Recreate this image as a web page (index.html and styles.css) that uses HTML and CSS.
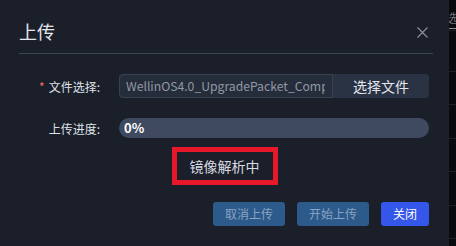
FILE: index.html
```html
<!DOCTYPE html>
<html lang="zh-CN">
<head>
<meta charset="utf-8">
<title>上传</title>
<link rel="stylesheet" href="styles.css">
</head>
<body>
<div class="page">
  <div class="dialog">
    <div class="header">
      <span class="title">上传</span>
      <span class="close">
        <svg width="11" height="11" viewBox="0 0 11 11"><path d="M0.5 0.5 L10.5 10.5 M10.5 0.5 L0.5 10.5" stroke="#8d929c" stroke-width="1.1" fill="none"/></svg>
      </span>
    </div>
    <div class="body">
      <div class="row">
        <div class="label"><span class="req">*</span>文件选择:</div>
        <div class="file">
          <div class="file-input"><div class="file-name">WellinOS4.0_UpgradePacket_Comp</div></div>
          <div class="file-btn">选择文件</div>
        </div>
      </div>
      <div class="row row-progress">
        <div class="label">上传进度:</div>
        <div class="progress"><span class="pct">0%</span></div>
      </div>
      <div class="status"><span class="status-box">镜像解析中</span></div>
      <div class="footer">
        <button class="btn btn-muted">取消上传</button>
        <button class="btn btn-muted">开始上传</button>
        <button class="btn btn-primary">关闭</button>
      </div>
    </div>
  </div>
  <div class="side">
    <div class="side-head"><span class="side-tab">选</span></div>
    <div class="side-row side-row-tall"></div>
    <div class="side-row"></div>
    <div class="side-row"></div>
    <div class="side-row"></div>
    <div class="side-row"></div>
    <div class="side-row"></div>
  </div>
</div>
</body>
</html>
```

FILE: styles.css
```css
* { box-sizing: border-box; }
html, body { margin: 0; padding: 0; }
body {
  width: 456px;
  height: 246px;
  overflow: hidden;
  background: #090a0e;
  font-family: "Noto Sans CJK SC", "Noto Sans", sans-serif;
}
.page {
  display: flex;
  height: 246px;
}
.dialog {
  width: 449px;
  flex: none;
  background: #1b1f2a;
  height: 246px;
}
.header {
  margin: 0 16px 0 19px;
  height: 54px;
  padding-top: 19px;
  border-bottom: 1px solid #3d4454;
  display: flex;
  justify-content: space-between;
  align-items: flex-start;
}
.title {
  font-size: 18px;
  line-height: 24px;
  color: #e3e6ec;
}
.close {
  display: flex;
  margin-top: 8px;
  margin-right: 5px;
}
.body {
  padding: 20px 20px 0 0;
}
.row {
  display: flex;
  align-items: center;
  height: 24px;
}
.row-progress {
  margin-top: 20px;
  height: 20px;
}
.label {
  width: 119px;
  flex: none;
  text-align: right;
  padding-right: 19px;
  font-size: 12px;
  color: #dfe2e8;
}
.req {
  color: #f56c6c;
  margin-right: 4px;
}
.file {
  flex: 1;
  display: flex;
  height: 24px;
  border-radius: 4px;
  background: #2a3344;
  overflow: hidden;
}
.file-input {
  width: 214px;
  flex: none;
  height: 24px;
  border: 1px solid #3a4252;
  border-radius: 4px 0 0 4px;
  background: #252d3b;
  padding: 0 7px 0 6px;
  display: flex;
  align-items: center;
}
.file-name {
  flex: 1;
  min-width: 0;
  overflow: hidden;
  white-space: nowrap;
  font-size: 12.2px;
  color: #9298a3;
  line-height: 22px;
}
.file-btn {
  flex: 1;
  display: flex;
  align-items: center;
  justify-content: center;
  font-size: 14px;
  color: #e3e6ec;
}
.progress {
  flex: 1;
  height: 20px;
  border-radius: 10px;
  background: #3f4a60;
  display: flex;
  align-items: center;
  padding-left: 5px;
}
.pct {
  font-size: 13px;
  font-weight: bold;
  color: #ffffff;
  line-height: 20px;
}
.status {
  padding-left: 20px;
  margin-top: 9px;
  display: flex;
  justify-content: center;
}
.status-box {
  display: block;
  width: 106px;
  height: 38px;
  border: 5px solid #e8182b;
  text-align: center;
  font-size: 14px;
  line-height: 28px;
  color: #d8dbe2;
}
.footer {
  margin-top: 17px;
  display: flex;
  justify-content: flex-end;
  gap: 12px;
}
.btn {
  height: 24px;
  border: none;
  border-radius: 3px;
  padding: 0 12px;
  font-family: inherit;
  font-size: 12px;
  line-height: 24px;
}
.btn-muted {
  background: #2c5a8a;
  color: #8aa3c2;
}
.btn-primary {
  background: #3456ea;
  color: #ffffff;
}
.side {
  flex: 1;
  overflow: hidden;
  display: flex;
  flex-direction: column;
}
.side-head {
  height: 31px;
  border-bottom: 1px solid #1d2027;
  margin-left: -3px;
  padding-top: 4px;
}
.side-tab {
  display: inline-block;
  font-size: 12px;
  line-height: 14px;
  color: #6e737c;
  padding-bottom: 3px;
  border-bottom: 1px solid #8d929b;
  white-space: nowrap;
}
.side-row {
  height: 33.4px;
  border-bottom: 1px solid #1d2027;
  flex: none;
}
.side-row-tall {
  height: 41px;
}
```
